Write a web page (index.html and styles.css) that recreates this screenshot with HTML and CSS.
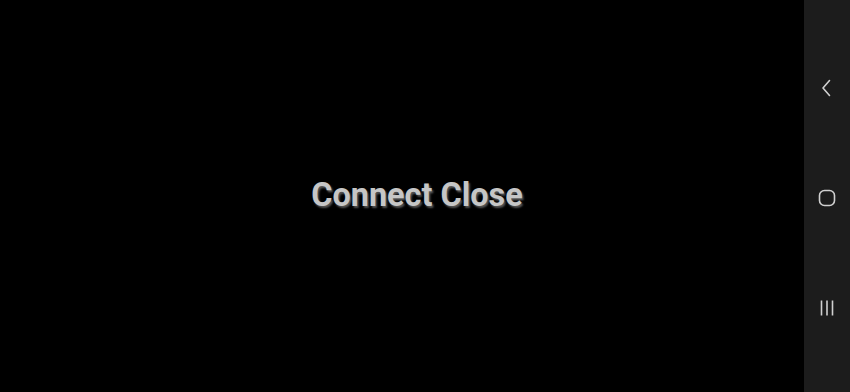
FILE: index.html
```html
<!DOCTYPE html>
<html>
<head>
<meta charset="utf-8">
<link rel="stylesheet" href="styles.css">
</head>
<body>
<div class="screen">
  <main class="content">
    <h1 class="title">Connect Close</h1>
  </main>
  <nav class="navbar">
    <div class="nav-btn">
      <svg width="14" height="18" viewBox="0 0 14 18"><path d="M9.5 1.5 L3 9 L9.5 16.5" fill="none" stroke="#d0d0d0" stroke-width="1.6" stroke-linecap="round" stroke-linejoin="round"/></svg>
    </div>
    <div class="nav-btn">
      <svg width="18" height="18" viewBox="0 0 18 18"><rect x="1.5" y="1.5" width="15" height="15" rx="5" fill="none" stroke="#d0d0d0" stroke-width="1.6"/></svg>
    </div>
    <div class="nav-btn">
      <svg width="16" height="18" viewBox="0 0 16 18"><path d="M2.5 1.5V16.5M8 1.5V16.5M13.5 1.5V16.5" fill="none" stroke="#d0d0d0" stroke-width="1.6"/></svg>
    </div>
  </nav>
</div>
</body>
</html>
```
FILE: styles.css
```css
html, body {
  margin: 0;
  padding: 0;
  background: #000;
}
.screen {
  display: flex;
  width: 850px;
  height: 392px;
}
.content {
  flex: 1;
  display: flex;
  align-items: center;
  justify-content: center;
  padding-left: 30px;
  padding-bottom: 3px;
}
.title {
  margin: 0;
  font-family: Roboto, "Liberation Sans", sans-serif;
  font-weight: 700;
  font-size: 32.4px;
  color: #c6c6c6;
  text-shadow: 1.5px 1.5px 2px #555;
}
.navbar {
  width: 46px;
  background: #1c1c1c;
  display: flex;
  flex-direction: column;
  justify-content: space-between;
  align-items: center;
  padding: 79px 0 75px;
  box-sizing: border-box;
}
.nav-btn {
  height: 18px;
  display: flex;
  align-items: center;
  justify-content: center;
}
```
